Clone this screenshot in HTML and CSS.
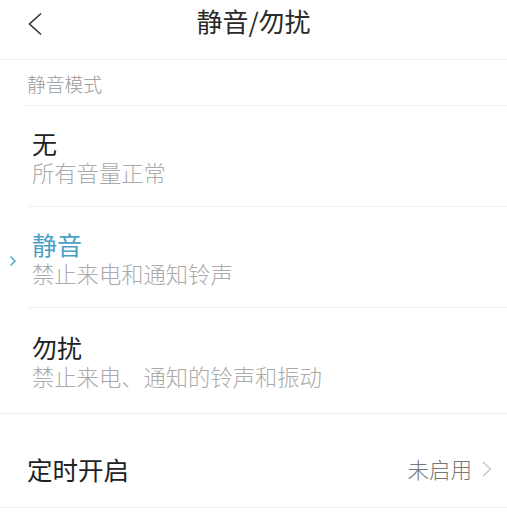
FILE: index.html
```html
<!DOCTYPE html>
<html lang="zh">
<head>
<meta charset="utf-8">
<link rel="stylesheet" href="styles.css">
</head>
<body>
<div class="page">
  <header class="topbar">
    <svg class="back" width="16" height="24" viewBox="0 0 16 24"><path d="M14 1.5 L2.5 12 L14 22.5" fill="none" stroke="#333" stroke-width="1.6"/></svg>
    <h1 class="title">静音/勿扰</h1>
  </header>
  <div class="section-label">静音模式</div>
  <div class="list">
    <div class="item">
      <div class="item-title">无</div>
      <div class="item-sub">所有音量正常</div>
    </div>
    <div class="item selected">
      <svg class="mark" width="8" height="12" viewBox="0 0 8 12"><path d="M1.5 1.5 L6 6 L1.5 10.5" fill="none" stroke="#5aaed0" stroke-width="1.6"/></svg>
      <div class="item-title">静音</div>
      <div class="item-sub">禁止来电和通知铃声</div>
    </div>
    <div class="item last">
      <div class="item-title">勿扰</div>
      <div class="item-sub">禁止来电、通知的铃声和振动</div>
    </div>
  </div>
  <div class="row">
    <span class="row-title">定时开启</span>
    <span class="row-value">未启用
      <svg class="arrow" width="12" height="18" viewBox="0 0 12 18"><path d="M2 2 L9.5 9 L2 16" fill="none" stroke="#c4c4c4" stroke-width="1.3"/></svg>
    </span>
  </div>
</div>
</body>
</html>
```
FILE: styles.css
```css
* { box-sizing: border-box; margin: 0; padding: 0; }
html, body { background: #fff; }
body {
  margin: 0;
  font-family: "Noto Sans CJK SC", "Noto Sans", sans-serif;
  font-weight: 300;
  width: 507px;
  overflow: hidden;
}
.page { width: 507px; }
.topbar {
  height: 60px;
  border-bottom: 1.5px solid #f0f0f0;
  display: flex;
  align-items: center;
  justify-content: center;
  position: relative;
}
.back { position: absolute; left: 27px; top: 12px; }
.title {
  font-size: 26px;
  font-weight: 400;
  color: #2a2a2a;
  line-height: 30px;
  margin-top: -17px;
}
.section-label {
  margin-left: 24px;
  padding: 9px 0 0 3px;
  height: 46px;
  font-size: 18.8px;
  line-height: 30px;
  color: #999;
  border-bottom: 1.5px solid #f0f0f0;
}
.list { margin-left: 28px; }
.item {
  position: relative;
  padding: 21px 0 20px 4px;
  border-bottom: 1.5px solid #f0f0f0;
}
.item.last { margin-left: -28px; padding-left: 32px; padding-top: 23px; padding-bottom: 23px; border-bottom: 1.5px solid #ececec; }
.item-title {
  font-size: 25px;
  line-height: 32px;
  color: #222;
  font-weight: 400;
}
.item-sub {
  font-size: 22.3px;
  line-height: 27px;
  color: #aaa;
}
.selected .item-title { color: #4aa0c4; }
.mark { position: absolute; left: -19px; top: 48px; }
.row {
  display: flex;
  justify-content: space-between;
  align-items: center;
  padding: 40px 14px 23px 27px;
  border-bottom: 1.5px solid #f0f0f0;
}
.row-title {
  font-size: 25.5px;
  line-height: 30px;
  color: #222;
  font-weight: 400;
}
.row-value {
  display: flex;
  align-items: center;
  gap: 9px;
  font-size: 21.5px;
  line-height: 30px;
  color: #777;
}
.arrow { display: block; }
```
